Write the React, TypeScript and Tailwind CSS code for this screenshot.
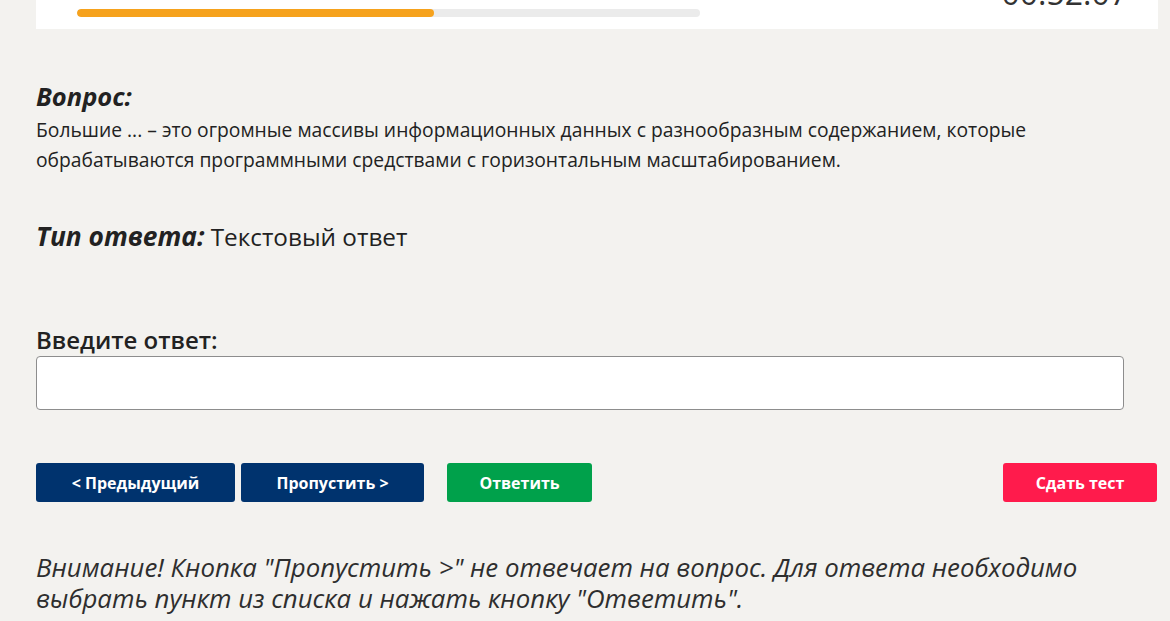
import { useState } from "react";

export default function App() {
  const [answer, setAnswer] = useState("");
  const progress = 57.3;

  return (
    <div className="min-h-screen overflow-hidden bg-[#f3f2ef] text-[#222] font-['Open_Sans','Noto_Sans',sans-serif]">
      <div className="mx-[36px] -mt-[24px] w-[1122px] bg-white pb-[12px] pl-[41px] pr-[30px]">
        <div className="flex h-[33px] items-start justify-end gap-[166px] text-[#333]">
          <span className="text-[20px] leading-[33px] text-[#555]">15 / 26</span>
          <span className="text-[32px] leading-[33px]">00:52:07</span>
        </div>
        <div className="h-[8px] w-[623px] overflow-hidden rounded-full bg-[#ebebeb]">
          <div className="h-full rounded-full bg-[#f6a21d]" style={{ width: `${progress}%` }} />
        </div>
      </div>

      <div className="px-[36px] pt-[51px]">
        <h2 className="text-[25.5px] font-bold italic leading-[32px]">Вопрос:</h2>
        <p className="mt-[3px] w-[1110px] text-[19.3px] leading-[29.5px]">
          Большие ... – это огромные массивы информационных данных с разнообразным содержанием, которые
          обрабатываются программными средствами с горизонтальным масштабированием.
        </p>

        <div className="mt-[46px] text-[24.3px] leading-[32px]">
          <span className="text-[26.3px] font-bold italic">Тип ответа:</span> Текстовый ответ
        </div>

        <label className="mt-[71px] block text-[24px] font-semibold leading-[32px]">Введите ответ:</label>
        <input
          type="text"
          value={answer}
          onChange={(e) => setAnswer(e.target.value)}
          className="block h-[54px] w-[1088px] rounded-[4px] border border-[#8d8d8d] bg-white px-3 text-[18px] outline-none"
        />

        <div className="mt-[53px] flex w-[1121px] items-center">
          <button className="h-[39px] w-[199px] rounded-[3px] bg-[#00336e] text-[16px] font-bold text-white">
            &lt; Предыдущий
          </button>
          <button className="ml-[6px] h-[39px] w-[183px] rounded-[3px] bg-[#00336e] text-[16px] font-bold text-white">
            Пропустить &gt;
          </button>
          <button className="ml-[23px] h-[39px] w-[145px] rounded-[3px] bg-[#00a14b] text-[16px] font-bold text-white">
            Ответить
          </button>
          <button className="ml-auto h-[39px] w-[154px] rounded-[3px] bg-[#ff1b4c] text-[16px] font-bold text-white">
            Сдать тест
          </button>
        </div>

        <p className="mt-[50px] w-[1090px] text-[25.8px] italic leading-[31px] text-[#2e2e2e]">
          Внимание! Кнопка "Пропустить &gt;" не отвечает на вопрос. Для ответа необходимо выбрать пункт из списка и
          нажать кнопку "Ответить".
        </p>
      </div>
    </div>
  );
}
